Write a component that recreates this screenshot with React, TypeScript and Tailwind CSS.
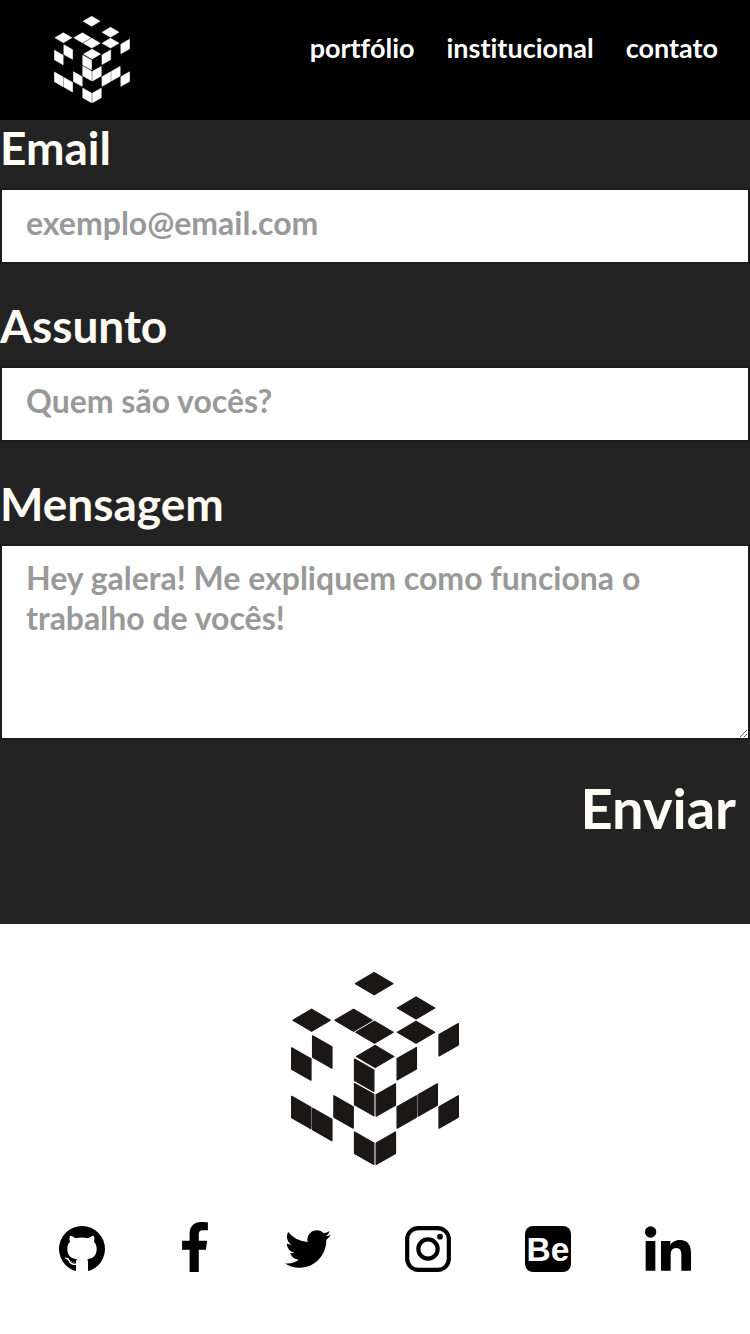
import { FaTwitter } from "react-icons/fa";

const tops = [[283, 70], [409, 143], [95, 180], [221, 180], [284, 216], [409, 216], [286, 289]];
const leftFaces = [[34, 261], [97, 225], [223, 295], [223, 368], [34, 407], [97, 443], [161, 405], [223, 514]];
const rightFaces = [[477, 188], [351, 260], [288, 369], [351, 405], [414, 369], [477, 405], [288, 514]];

function CubeLogo({ className }: { className: string }) {
  return (
    <svg viewBox="33 35 505 580" className={className} fill="currentColor" stroke="currentColor" strokeWidth="4" strokeLinejoin="round" role="img" aria-label="Cubo">
      {tops.map(([x, y]) => (
        <path key={`t${x}-${y}`} d={`M${x - 56} ${y}L${x} ${y - 33}L${x + 56} ${y}L${x} ${y + 33}Z`} />
      ))}
      {leftFaces.map(([x, y]) => (
        <path key={`l${x}-${y}`} d={`M${x + 1} ${y + 2}l58 33v64l-58 -33Z`} />
      ))}
      {rightFaces.map(([x, y]) => (
        <path key={`r${x}-${y}`} d={`M${x + 1} ${y + 35}l58 -33v64l-58 33Z`} />
      ))}
    </svg>
  );
}

function GithubIcon() {
  return (
    <svg viewBox="0 0 138 138" className="size-[46px]" aria-hidden="true">
      <circle cx="69" cy="69" r="69" />
      <path fill="white" d="M33 29c6 1 12 4 17 8 12-3 25-3 37 0 5-4 11-7 17-8 3 6 3 12 1 18 6 6 8 13 8 22 0 20-11 28-28 31 2 3 2 7 2 11v27H51v-28c0-4 1-8 3-10-18-3-29-11-29-31 0-9 2-16 8-22-2-6-2-12 0-18Z" />
      <path fill="none" stroke="white" strokeWidth="4" d="M19 96c5 0 8 3 11 8 5 10 11 13 22 10" />
      <path fill="none" stroke="white" strokeWidth="2" strokeDasharray="4 3" d="M27 96c4 8 10 13 22 15" />
    </svg>
  );
}

function FacebookIcon() {
  return (
    <svg viewBox="0 0 264 512" className="mx-auto h-[50px] w-[26px]" fill="currentColor" aria-hidden="true">
      <path d="M76.7 512V283H0v-91h76.7v-71.7C76.7 42.4 124.3 0 193.8 0c33.3 0 61.9 2.5 70.2 3.6V85h-48.2c-37.8 0-45.1 18-45.1 44.3V192H256l-11.7 91h-73.6v229" />
    </svg>
  );
}

function InstagramIcon() {
  return (
    <svg viewBox="0 0 138 138" className="size-[46px]" fill="none" stroke="currentColor" strokeWidth="12.5" aria-hidden="true">
      <rect x="6.5" y="6.5" width="125" height="125" rx="33" />
      <circle cx="69" cy="69" r="29" />
      <circle cx="105" cy="32" r="8.5" fill="currentColor" stroke="none" />
    </svg>
  );
}

function BehanceIcon() {
  return (
    <svg viewBox="0 0 46 46" className="size-[46px]" aria-hidden="true">
      <rect width="46" height="46" rx="8" />
      <text x="1.5" y="35" fill="white" fontFamily="Liberation Sans, Arial, sans-serif" fontWeight="700" fontSize="33.5">Be</text>
    </svg>
  );
}

function LinkedinIcon() {
  return (
    <svg viewBox="0 0 138 138" className="size-[46px]" fill="currentColor" aria-hidden="true">
      <circle cx="17" cy="18" r="17" />
      <path d="M2 45h29v89H2zM48 45h28v12c5-8 14-15 28-15 25 0 34 16 34 40v52h-29V87c0-12-3-21-15-21-13 0-17 9-17 21v47H48z" />
    </svg>
  );
}

const links = ["portfólio", "institucional", "contato"];
const labelClass = "mb-3 block text-[46px] leading-[56px] font-bold text-[#fffcf5]";
const fieldClass = "block w-full rounded-none border-2 border-[#1c1a1b] bg-white px-6 text-[32px] leading-10 font-bold text-[#222] placeholder:text-[#999] placeholder:opacity-100";

export default function App() {
  return (
    <div className="min-h-screen bg-white font-['Lato','Noto_Sans',sans-serif] [font-variant-ligatures:none]">
      <header className="flex h-[120px] items-start justify-between bg-black pr-8 pl-[54px] text-white">
        <a href="#inicio" className="mt-4"><CubeLogo className="h-[87px] w-[76px]" /></a>
        <nav className="mt-8 flex gap-8 text-[27px] leading-8 font-bold">
          {links.map((link) => <a key={link} href={`#${link}`}>{link}</a>)}
        </nav>
      </header>

      <main className="bg-[#232323] pb-20">
        <form onSubmit={(e) => e.preventDefault()}>
          <div className="mb-[34px]">
            <label htmlFor="email" className={labelClass}>Email</label>
            <input id="email" type="email" placeholder="exemplo@email.com" className={`${fieldClass} h-[76px] pb-2`} />
          </div>
          <div className="mb-[34px]">
            <label htmlFor="assunto" className={labelClass}>Assunto</label>
            <input id="assunto" type="text" placeholder="Quem são vocês?" className={`${fieldClass} h-[76px] pb-2`} />
          </div>
          <div>
            <label htmlFor="mensagem" className={labelClass}>Mensagem</label>
            <textarea id="mensagem" placeholder="Hey galera! Me expliquem como funciona o trabalho de vocês!" className={`${fieldClass} h-[196px] py-3`} />
          </div>
          <div className="mt-8 flex justify-end pr-[14px]">
            <button type="submit" className="text-[56px] leading-[72px] font-bold text-[#fffcf5]">Enviar</button>
          </div>
        </form>
      </main>

      <footer className="px-[59px] pt-12 pb-8">
        <CubeLogo className="mx-auto h-[193px] w-[168px] text-[#1a1716]" />
        <div className="mt-[57px] flex items-center justify-between text-black">
          <a href="#github" aria-label="GitHub"><GithubIcon /></a>
          <a href="#facebook" aria-label="Facebook" className="w-8 pb-1"><FacebookIcon /></a>
          <a href="#twitter" aria-label="Twitter"><FaTwitter className="size-[46px]" /></a>
          <a href="#instagram" aria-label="Instagram"><InstagramIcon /></a>
          <a href="#behance" aria-label="Behance"><BehanceIcon /></a>
          <a href="#linkedin" aria-label="LinkedIn"><LinkedinIcon /></a>
        </div>
      </footer>
    </div>
  );
}
